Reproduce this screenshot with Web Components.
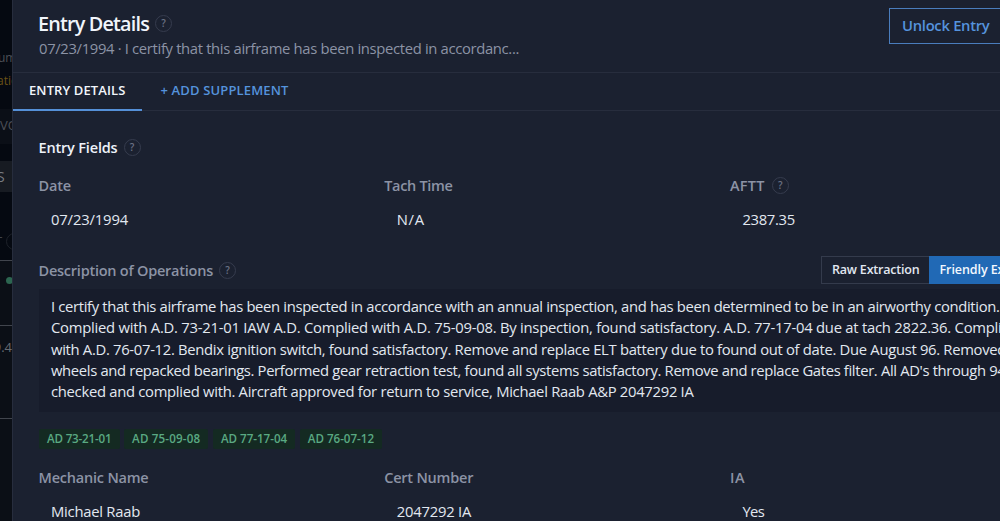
<!DOCTYPE html>
<html lang="en">
<head>
<meta charset="utf-8">
<title>Entry Details</title>
<style>
  html, body { height: 100%; }
  body {
    margin: 0;
    overflow: hidden;
    background: #050911;
    color: #e2e8f0;
    font: 14.8px/21px "Open Sans", "Noto Sans", sans-serif;
  }
</style>
</head>
<body>
<logbook-app></logbook-app>

<script>
// one line of text, letter-spaced so that it takes exactly `width` px
class TextLine extends HTMLElement {
  constructor() {
    super();
    this.attachShadow({ mode: 'open' });
  }

  connectedCallback() {
    this.shadowRoot.innerHTML = `
      <style>
        :host { display: block; white-space: nowrap; width: max-content; }
        span { display: inline-block; }
      </style>
      <span><slot></slot></span>
    `;
    this.fit();
  }

  fit() {
    const width = parseFloat(this.getAttribute('width'));
    if (!width) return;
    const span = this.shadowRoot.querySelector('span');
    const natural = span.getBoundingClientRect().width;
    const spacing = (width - natural) / this.textContent.length;
    span.style.letterSpacing = spacing.toFixed(4) + 'px';
  }
}

class HelpDot extends HTMLElement {
  constructor() {
    super();
    this.attachShadow({ mode: 'open' });
    this.shadowRoot.innerHTML = `
      <style>
        :host {
          display: flex; align-items: center; justify-content: center;
          box-sizing: border-box; width: 17px; height: 17px; flex: none;
          border: 1px solid #363c4e; border-radius: 50%;
          color: #6b7285; font-size: 10px; font-weight: 600; line-height: 15px;
        }
      </style>
      <span>?</span>
    `;
  }
}

class PanelHeader extends HTMLElement {
  constructor() {
    super();
    this.attachShadow({ mode: 'open' });
    this.shadowRoot.innerHTML = `
      <style>
        :host {
          display: flex; justify-content: space-between; box-sizing: border-box;
          height: 73px; padding: 8px 69px 0 25px; border-bottom: 1px solid #272d3d;
        }
        .title { display: flex; gap: 6px; align-items: center; height: 30px; color: #f1f5fb; font-size: 19.8px; font-weight: 600; }
        .sub { color: #8c93a5; padding-left: 1px; }
        button {
          box-sizing: border-box; height: 36px; width: 117px; padding: 0 0 2px 12px; text-align: left;
          background: none; border: 1px solid #4a7dbd; color: #5593dd; font: inherit; font-weight: 600;
        }
      </style>
      <div>
        <div class="title"><text-line width="111">Entry Details</text-line><help-dot></help-dot></div>
        <div class="sub"><text-line width="480">07/23/1994 · I certify that this airframe has been inspected in accordanc...</text-line></div>
      </div>
      <button><text-line width="87.5">Unlock Entry</text-line></button>
    `;
  }
}

class TabBar extends HTMLElement {
  constructor() {
    super();
    this.attachShadow({ mode: 'open' });
    this.shadowRoot.innerHTML = `
      <style>
        :host {
          display: flex; box-sizing: border-box; height: 38px; border-bottom: 1px solid #272d3d;
          font-size: 13px; font-weight: 600; line-height: 35px;
        }
        .tab { box-sizing: border-box; height: 38px; padding: 0 16px; color: #5593dd; border-bottom: 2px solid transparent; }
        .active { width: 129px; color: #f1f5fb; border-color: #5590d8; }
      </style>
      <div class="tab active"><text-line width="96.5">ENTRY DETAILS</text-line></div>
      <div class="tab" style="padding-left: 18.5px"><text-line width="128">+ ADD SUPPLEMENT</text-line></div>
    `;
  }
}

class EntryField extends HTMLElement {
  constructor() {
    super();
    this.attachShadow({ mode: 'open' });
    this.shadowRoot.innerHTML = `
      <style>
        :host { display: block; }
        .label { display: flex; gap: 7px; align-items: center; height: 21px; color: #8c93a5; font-weight: 600; font-size: 14.5px; }
        .value { margin-top: 13px; padding-left: 12.5px; height: 21px; }
      </style>
      <div class="label"><slot name="label"></slot></div>
      <div class="value"><slot></slot></div>
    `;
  }
}

class ViewToggle extends HTMLElement {
  constructor() {
    super();
    this.attachShadow({ mode: 'open' });
    this.shadowRoot.innerHTML = `
      <style>
        :host { display: flex; font-size: 12.5px; font-weight: 600; line-height: 26px; }
        div { box-sizing: border-box; height: 28px; padding-left: 10px; border: 1px solid #343b4c; }
        .raw { width: 107.5px; border-right: 0; }
        .friendly { width: 136px; background: #2169b5; border-color: #2169b5; color: #f3f8fe; }
      </style>
      <div class="raw"><text-line width="87.5">Raw Extraction</text-line></div>
      <div class="friendly"><text-line width="112">Friendly Extraction</text-line></div>
    `;
  }
}

class AdTag extends HTMLElement {
  constructor() {
    super();
    this.attachShadow({ mode: 'open' });
    this.shadowRoot.innerHTML = `
      <style>
        :host {
          display: block; height: 20px; padding: 0 8px; border-radius: 2px;
          background: #142a22; color: #5aa982; font-size: 11.6px; font-weight: 600; line-height: 20px;
        }
      </style>
      <slot></slot>
    `;
  }
}

class LogList extends HTMLElement {
  constructor() {
    super();
    this.attachShadow({ mode: 'open' });
    this.shadowRoot.innerHTML = `
      <style>
        :host {
          display: flex; flex-direction: column; flex: none; align-items: stretch;
          width: 12px; height: 521px; overflow: hidden; color: #4d5057; font-size: 13px;
        }
        div { display: flex; flex: none; align-items: center; box-sizing: border-box; white-space: nowrap; overflow: hidden; }
        .um { height: 23px; margin-top: 46px; font-size: 12px; }
        .um span { margin-left: -2px; }
        .atio { height: 23px; color: #6b5116; font-size: 12px; }
        .atio span { margin-left: -3px; }
        .vo { height: 35px; margin-top: 17px; background: #0b0f17; padding-bottom: 3px; }
        .s { height: 31px; margin-top: 17px; background: #171b22; color: #777b82; }
        .s span { margin-left: -3px; }
        .t { height: 22px; margin-top: 38px; color: #41454d; }
        .t span { margin-left: -5px; }
        .row { align-items: flex-start; background: #0b0f16; border-top: 1px solid #41454d; }
        i { display: block; width: 7px; height: 7px; border-radius: 50%; background: #2c6650; flex: none; margin-left: 6px; }
        .ring { width: 15px; height: 15px; border: 1px solid #1d2129; background: none; margin-left: 4px; }
      </style>
      <div class="um"><span>um</span></div>
      <div class="atio"><span>atio</span></div>
      <div class="vo"><span>VO</span></div>
      <div class="s"><span style="font-size: 14px">S</span></div>
      <div class="t"><span>T</span><i class="ring"></i></div>
      <div class="row" style="height: 65px; margin-top: 8px; padding-top: 16px"><i></i></div>
      <div class="row" style="height: 93px; padding-top: 11px; justify-content: flex-end; color: #666a71">9.4</div>
      <div class="row" style="height: 103px"></div>
    `;
  }
}

class LogbookApp extends HTMLElement {
  constructor() {
    super();
    this.attachShadow({ mode: 'open' });
  }

  connectedCallback() {
    this.shadowRoot.innerHTML = `
      <style>
        :host { display: flex; height: 521px; overflow: hidden; }
        main { flex: none; box-sizing: border-box; width: 1063px; height: 521px; overflow: hidden; background: #1b2130; border-left: 1px solid #272d3d; }
        section { padding: 26px 0 0 25.5px; }
        h2 { display: flex; gap: 6px; align-items: center; margin: 0; height: 21px; font-size: 14.5px; font-weight: 600; color: #eef2f9; }
        .fields { display: grid; grid-template-columns: repeat(3, 345.7px); margin-top: 17px; }
        .bar { display: flex; justify-content: space-between; align-items: center; height: 28px; margin-top: 26px; }
        .bar .name { display: flex; gap: 6px; align-items: center; color: #8c93a5; font-weight: 600; font-size: 14.5px; }
        view-toggle { margin-right: 10.5px; }
        .text { box-sizing: border-box; height: 123px; margin: 5px 0 0 .5px; padding: 7px 0 0 12px; background: #171c2b; line-height: 21.3px; }
        .tags { display: flex; gap: 4.6px; margin: 17px 0 18px .5px; }
      </style>
      <log-list></log-list>
      <main>
        <panel-header></panel-header>
        <tab-bar></tab-bar>
        <section>
          <h2><text-line width="79">Entry Fields</text-line><help-dot></help-dot></h2>
          <div class="fields">
            <entry-field><text-line slot="label" width="32.5">Date</text-line><text-line width="77">07/23/1994</text-line></entry-field>
            <entry-field><text-line slot="label" width="68.5">Tach Time</text-line><text-line width="28">N/A</text-line></entry-field>
            <entry-field><text-line slot="label" width="35">AFTT</text-line><help-dot slot="label"></help-dot><text-line width="52.5">2387.35</text-line></entry-field>
          </div>
          <div class="bar">
            <div class="name"><text-line width="174.5">Description of Operations</text-line><help-dot></help-dot></div>
            <view-toggle></view-toggle>
          </div>
          <div class="text">
            <text-line width="948.5">I certify that this airframe has been inspected in accordance with an annual inspection, and has been determined to be in an airworthy condition.</text-line>
            <text-line width="967.5">Complied with A.D. 73-21-01 IAW A.D. Complied with A.D. 75-09-08. By inspection, found satisfactory. A.D. 77-17-04 due at tach 2822.36. Complied</text-line>
            <text-line width="955">with A.D. 76-07-12. Bendix ignition switch, found satisfactory. Remove and replace ELT battery due to found out of date. Due August 96. Removed</text-line>
            <text-line width="954.5">wheels and repacked bearings. Performed gear retraction test, found all systems satisfactory. Remove and replace Gates filter. All AD's through 94</text-line>
            <text-line width="642.5">checked and complied with. Aircraft approved for return to service, Michael Raab A&amp;P 2047292 IA</text-line>
          </div>
          <div class="tags">
            <ad-tag><text-line width="64.5">AD 73-21-01</text-line></ad-tag>
            <ad-tag><text-line width="68.2">AD 75-09-08</text-line></ad-tag>
            <ad-tag><text-line width="66.3">AD 77-17-04</text-line></ad-tag>
            <ad-tag><text-line width="66.3">AD 76-07-12</text-line></ad-tag>
          </div>
          <div class="fields">
            <entry-field><text-line slot="label" width="110">Mechanic Name</text-line><text-line width="89">Michael Raab</text-line></entry-field>
            <entry-field><text-line slot="label" width="89">Cert Number</text-line><text-line width="74.5">2047292 IA</text-line></entry-field>
            <entry-field><text-line slot="label" width="15.5">IA</text-line><text-line width="22">Yes</text-line></entry-field>
          </div>
        </section>
      </main>
    `;
  }
}

customElements.define('text-line', TextLine);
customElements.define('help-dot', HelpDot);
customElements.define('panel-header', PanelHeader);
customElements.define('tab-bar', TabBar);
customElements.define('entry-field', EntryField);
customElements.define('view-toggle', ViewToggle);
customElements.define('ad-tag', AdTag);
customElements.define('log-list', LogList);
customElements.define('logbook-app', LogbookApp);
</script>
</body>
</html>
